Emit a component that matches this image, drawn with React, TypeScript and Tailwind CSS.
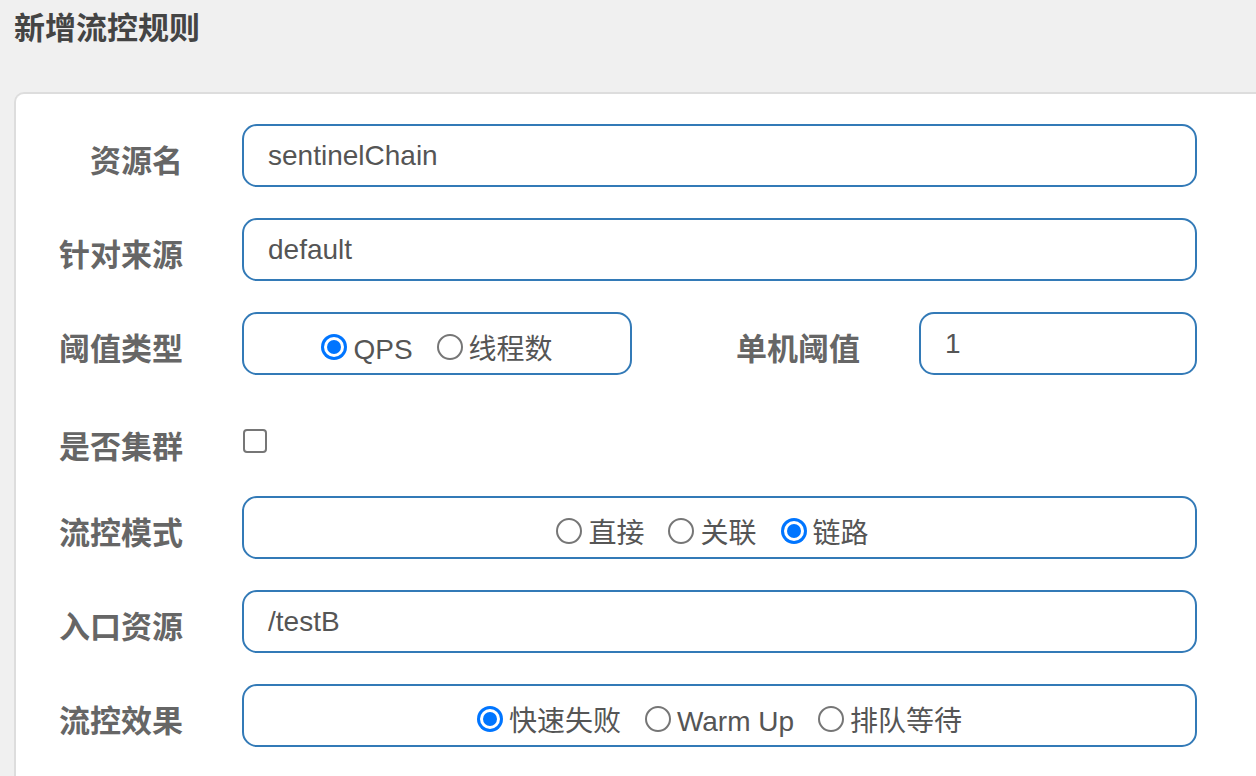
import clsx from 'clsx';
import { ReactNode } from 'react';

const font = "font-['Liberation_Sans','Noto_Sans_CJK_SC',sans-serif]";

const Label = ({ children, className }: { children: ReactNode; className?: string }) => (
  <div
    className={clsx(
      'shrink-0 pt-[13px] text-right text-[31px] font-bold leading-[42px] text-[#666]',
      className,
    )}
  >
    {children}
  </div>
);

const Box = ({ children, className }: { children: ReactNode; className?: string }) => (
  <div
    className={clsx(
      'flex h-[63px] shrink-0 items-center rounded-[15px] border-2 border-[#337ab7] bg-white',
      className,
    )}
  >
    {children}
  </div>
);

const TextBox = ({ value, className }: { value: string; className?: string }) => (
  <Box className={clsx('pl-[24px] text-[28px] leading-[40px] text-[#555]', className)}>
    {value}
  </Box>
);

const Radio = ({ label, checked }: { label: string; checked?: boolean }) => (
  <div className="flex items-center">
    {checked ? (
      <div className="mt-[6px] flex h-[26px] w-[26px] items-center justify-center rounded-full bg-[#0075ff]">
        <div className="flex h-[20px] w-[20px] items-center justify-center rounded-full bg-white">
          <div className="h-[14px] w-[14px] rounded-full bg-[#0075ff]" />
        </div>
      </div>
    ) : (
      <div className="mt-[6px] h-[26px] w-[26px] rounded-full border-2 border-[#767676] bg-white" />
    )}
    <span className="ml-[6px] mt-[13px] text-[28px] leading-[40px] text-[#555]">{label}</span>
  </div>
);

const RadioGroup = ({
  options,
  value,
  className,
}: {
  options: string[];
  value: string;
  className?: string;
}) => (
  <div className={clsx('flex w-full items-center justify-center gap-[24px]', className)}>
    {options.map((o) => (
      <Radio key={o} label={o} checked={o === value} />
    ))}
  </div>
);

const Row = ({
  label,
  children,
  short,
}: {
  label: string;
  children: ReactNode;
  short?: boolean;
}) => (
  <div className={clsx('flex items-center', short ? 'h-[59px] pt-[11px]' : 'h-[63px]')}>
    <Label className="w-[167px]">{label}</Label>
    <div className="ml-[59px] flex items-center">{children}</div>
  </div>
);

export default function App() {
  return (
    <div className={clsx('h-[776px] overflow-hidden bg-[#f0f0f0]', font)}>
      <h1 className="h-[92px] pl-[14px] pt-[8px] text-[31px] font-bold leading-[42px] text-[#444]">
        新增流控规则
      </h1>
      <div className="-mr-[40px] ml-[14px] rounded-tl-[10px] border-l-2 border-t-2 border-[#dddddd] bg-white pb-[40px] pt-[30px]">
        <div className="flex flex-col gap-[31px]">
          <Row label="资源名">
            <TextBox value="sentinelChain" className="w-[955px]" />
          </Row>
          <Row label="针对来源">
            <TextBox value="default" className="w-[955px]" />
          </Row>
          <Row label="阈值类型">
            <Box className="w-[390px]">
              <RadioGroup options={['QPS', '线程数']} value="QPS" />
            </Box>
            <Label className="w-[228px]">单机阈值</Label>
            <TextBox value="1" className="ml-[59px] w-[278px]" />
          </Row>
          <Row label="是否集群" short>
            <div className="ml-[1px] h-[24px] w-[24px] rounded-[4px] border-2 border-[#767676] bg-white" />
          </Row>
          <Row label="流控模式">
            <Box className="w-[955px]">
              <RadioGroup options={['直接', '关联', '链路']} value="链路" className="pr-[14px]" />
            </Box>
          </Row>
          <Row label="入口资源">
            <TextBox value="/testB" className="w-[955px]" />
          </Row>
          <Row label="流控效果">
            <Box className="w-[955px]">
              <RadioGroup options={['快速失败', 'Warm Up', '排队等待']} value="快速失败" />
            </Box>
          </Row>
        </div>
      </div>
    </div>
  );
}
